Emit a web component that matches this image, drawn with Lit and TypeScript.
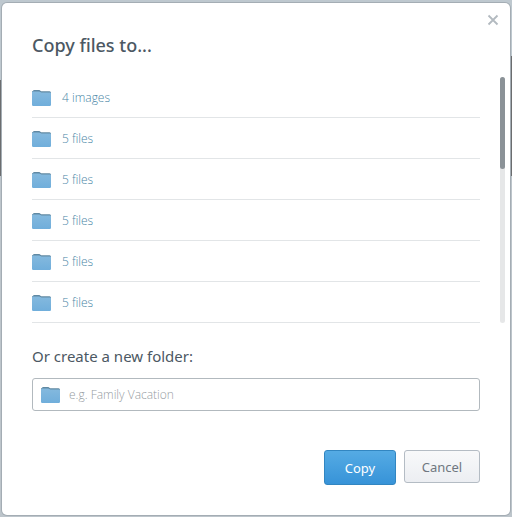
import { LitElement, html, css, svg } from "lit";
import { customElement, property } from "lit/decorators.js";

@customElement("folder-icon")
class FolderIcon extends LitElement {
  static styles = css`
    :host { display: block; flex: none; width: 19px; height: 16px; }
    .art { display: block; width: 19px; height: 16px; }
  `;
  render() {
    return html`<svg class="art" viewBox="0 0 19 16" aria-hidden="true">
      ${svg`<defs><linearGradient id="front" x1="0" y1="0" x2="0" y2="1">
        <stop offset="0" stop-color="#84b9de"/><stop offset="1" stop-color="#70aedb"/>
      </linearGradient></defs>
      <path d="M0 4V1.8Q0 1 .8.9L1.8.1H7.4L9.2 1.3H17.6Q19 1.5 19 2.8V6H0Z" fill="#6089a3"/>
      <path d="M0 2.3Q0 1.5.8 1.5H7.2L9.5 2.6H18.2Q19 2.6 19 3.4V14.8Q19 16 17.8 16H1.2Q0 16 0 14.8Z" fill="url(#front)"/>`}
    </svg>`;
  }
}

@customElement("folder-row")
class FolderRow extends LitElement {
  @property() label = "";
  static styles = css`
    :host { display: block; border-bottom: 1px solid #e2e5e7; }
    .row {
      display: flex; align-items: center; gap: 11px; width: 100%; height: 40px;
      padding: 1px 0 0; border: 0; background: none; color: #4a86a6; text-align: left;
      font: 300 12px/16px "Open Sans", "Noto Sans", sans-serif; cursor: pointer;
    }
  `;
  render() {
    return html`<button class="row" type="button"><folder-icon></folder-icon><span>${this.label}</span></button>`;
  }
}

@customElement("app-root")
class AppRoot extends LitElement {
  private folders = ["4 images", "5 files", "5 files", "5 files", "5 files", "5 files"];

  static styles = css`
    * { box-sizing: border-box; }
    :host {
      display: block; box-sizing: border-box; min-height: 100vh; padding: 3px 2px 2px;
      font-family: "Noto Sans", "Open Sans", sans-serif; color: #4c5863;
      background:
        linear-gradient(#bec8cf 80px, #6b6d6f 80px, #6b6d6f 176px, #bdc5cb 176px) left / 50% 100% no-repeat,
        linear-gradient(#bec8cf 56px, #6b6d6f 56px, #6b6d6f 176px, #bdc5cb 176px) right / 50% 100% no-repeat;
    }
    .dialog {
      display: flex; flex-direction: column; min-height: calc(100vh - 5px);
      padding: 0 5px 30px 30px; border-radius: 5px; background: #fff;
      box-shadow: 0 0 0 1px #a4adb4;
    }
    .head { display: flex; justify-content: space-between; height: 74px; }
    .title { margin: 30px 0 0; font-size: 18px; line-height: 25px; font-weight: 500; }
    .close { width: 24px; height: 24px; margin: 5px 0 0; padding: 6px; border: 0; background: none; cursor: pointer; }
    .cross { display: block; width: 12px; height: 12px; }
    .browser { display: flex; gap: 20px; }
    .list { flex: 1; margin: 0; padding: 0; list-style: none; }
    .track { width: 5px; border-radius: 3px; background: #e6e7e8; }
    .thumb { height: 92px; border-radius: 3px; background: #8b9297; }
    .create { display: flex; flex-direction: column; gap: 12px; padding: 23px 25px 0 0; }
    .label { font-size: 15px; line-height: 20px; font-weight: 400; }
    .field {
      display: flex; align-items: center; gap: 9px; height: 33px; padding: 0 8px;
      border: 1px solid #b2b9be; border-radius: 3px; background: #fff;
    }
    .input {
      flex: 1; min-width: 0; padding: 0; border: 0; outline: 0; background: none; color: #4c5863;
      font: 300 12px/16px "Open Sans", "Noto Sans", sans-serif;
    }
    .input::placeholder { color: #969ca2; opacity: 1; }
    .actions { display: flex; justify-content: flex-end; align-items: flex-start; gap: 8px; padding: 39px 25px 0 0; }
    .button {
      height: 33px; padding: 0; border: 1px solid #b4bcc4; border-radius: 3px;
      font: 400 13px/18px "Noto Sans", "Open Sans", sans-serif; cursor: pointer;
    }
    .copy { width: 72px; height: 35px; border-color: #3286c1; color: #fff; background: linear-gradient(#55abe4, #3793d8); }
    .cancel { width: 76px; color: #6f7780; background: linear-gradient(#f8f9fa, #eceef2); }
  `;

  render() {
    return html`
      <main class="dialog" role="dialog" aria-labelledby="title">
        <header class="head">
          <h1 class="title" id="title">Copy files to...</h1>
          <button class="close" type="button" aria-label="Close">
            <svg class="cross" viewBox="0 0 12 12" aria-hidden="true">
              <path d="M1.5 1.5L10.5 10.5M10.5 1.5L1.5 10.5" stroke="#b3bac0" stroke-width="1.8" />
            </svg>
          </button>
        </header>
        <section class="browser">
          <ul class="list">
            ${this.folders.map((f) => html`<li><folder-row label=${f}></folder-row></li>`)}
          </ul>
          <div class="track"><div class="thumb"></div></div>
        </section>
        <section class="create">
          <label class="label" for="name">Or create a new folder:</label>
          <div class="field">
            <folder-icon></folder-icon>
            <input class="input" id="name" type="text" placeholder="e.g. Family Vacation" />
          </div>
        </section>
        <footer class="actions">
          <button class="button copy" type="button">Copy</button>
          <button class="button cancel" type="button">Cancel</button>
        </footer>
      </main>
    `;
  }
}
